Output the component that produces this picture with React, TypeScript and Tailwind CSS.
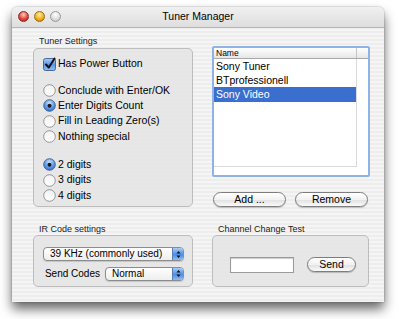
import React from "react";

const font = { fontFamily: '"Liberation Sans", Arial, sans-serif' };

function Radio({ on }: { on?: boolean }) {
  return (
    <svg width="13" height="13" viewBox="0 0 13 13" className="shrink-0">
      <defs>
        <radialGradient id="rb" cx="50%" cy="30%" r="70%">
          <stop offset="0" stopColor="#cfe3fb" />
          <stop offset="0.5" stopColor="#6ea5ea" />
          <stop offset="1" stopColor="#2f6fd0" />
        </radialGradient>
        <linearGradient id="rw" x1="0" y1="0" x2="0" y2="1">
          <stop offset="0" stopColor="#f2f2f2" />
          <stop offset="1" stopColor="#ffffff" />
        </linearGradient>
      </defs>
      <circle cx="6.5" cy="6.5" r="5.8" fill={on ? "url(#rb)" : "url(#rw)"} stroke={on ? "#3a5f95" : "#8a8a8a"} strokeWidth="0.9" />
      {on && <circle cx="6.5" cy="6.8" r="2" fill="#1a1a1a" />}
    </svg>
  );
}

function Check() {
  return (
    <svg width="14" height="14" viewBox="0 0 14 14" className="shrink-0">
      <defs>
        <linearGradient id="cb" x1="0" y1="0" x2="0" y2="1">
          <stop offset="0" stopColor="#a9cdf6" />
          <stop offset="0.5" stopColor="#5b97e6" />
          <stop offset="1" stopColor="#8fbef4" />
        </linearGradient>
      </defs>
      <rect x="0.5" y="1.5" width="12" height="12" rx="2" fill="url(#cb)" stroke="#3a5f95" strokeWidth="0.9" />
      <path d="M3 7.5 L5.8 10.5 L11.5 1.5" fill="none" stroke="#111" strokeWidth="2" strokeLinecap="round" strokeLinejoin="round" />
    </svg>
  );
}

function Row({ on, children }: { on?: boolean; children: React.ReactNode }) {
  return (
    <div className="h-[15.3px] flex items-center gap-[2px] text-[10.5px] text-black">
      <Radio on={on} />
      <span>{children}</span>
    </div>
  );
}

function Popup({ label, w }: { label: string; w: string }) {
  return (
    <div className={`${w} h-[14px] flex rounded-[4px] border border-[#8c8c8c] overflow-hidden bg-[linear-gradient(#ffffff,#eeeeee)] shadow-[0_1px_1px_rgba(0,0,0,0.15)]`}>
      <div className="flex-1 flex items-center pl-[6px] text-[10px] text-black leading-none">{label}</div>
      <div className="w-[11px] flex items-center justify-center bg-[linear-gradient(#a8cdf6,#4c8de4_55%,#8dbcf2)] border-l border-[#5a7fb5]">
        <svg width="5" height="9" viewBox="0 0 5 9">
          <path d="M0.5 3.5 L2.5 1 L4.5 3.5 Z" fill="#111" />
          <path d="M0.5 5.5 L2.5 8 L4.5 5.5 Z" fill="#111" />
        </svg>
      </div>
    </div>
  );
}

function Button({ label, w }: { label: string; w: string }) {
  return (
    <div className={`${w} h-[15px] rounded-full border border-[#7d7d7d] bg-[linear-gradient(#ffffff,#f2f2f2_50%,#e2e2e2_55%,#fafafa)] flex items-center justify-center text-[10.5px] text-black leading-none shadow-[0_1px_1px_rgba(0,0,0,0.2)]`}>
      {label}
    </div>
  );
}

export default function App() {
  return (
    <div className="w-[400px] h-[319px] bg-white pt-[7px] pl-[12px]" style={font}>
      <div className="w-[372px] h-[295px] rounded-t-[6px] flex flex-col overflow-hidden shadow-[0_7px_12px_rgba(0,0,0,0.6),0_0_2px_rgba(0,0,0,0.35)] bg-[repeating-linear-gradient(#ededed_0px,#ededed_2px,#f5f5f5_2px,#f5f5f5_4px)]">
        {/* title bar */}
        <div className="relative h-[21px] flex items-center border-b border-[#b5b5b5] bg-[linear-gradient(#f0f0f0,#dedede)]">
          <div className="absolute left-[6px] top-[4px] flex gap-[5px]">
            <span className="w-[11px] h-[11px] rounded-full border border-[#8a2a2a] bg-[radial-gradient(circle_at_50%_30%,#ffd0c8,#e8463c_55%,#a81d12)]" />
            <span className="w-[11px] h-[11px] rounded-full border border-[#9a6a10] bg-[radial-gradient(circle_at_50%_30%,#fff0b0,#f2b21c_55%,#c07808)]" />
            <span className="w-[11px] h-[11px] rounded-full border border-[#9a9a9a] bg-[radial-gradient(circle_at_50%_30%,#ffffff,#dcdcdc_60%,#b8b8b8)]" />
          </div>
          <div className="w-full text-center text-[10.5px] text-black">Tuner Manager</div>
        </div>
        {/* body */}
        <div className="flex pl-[21px] gap-[19px]">
          {/* left column */}
          <div className="w-[160px] flex flex-col pt-[7px]">
            <div className="h-[13px] pl-[6px] text-[9px] leading-[12px] text-[#222]">Tuner Settings</div>
            <div className="h-[159px] rounded-[5px] border border-[#bdbdbd] bg-[#e4e4e4]/80 pl-[9px] pt-[7px] flex flex-col">
              <div className="h-[15px] flex items-center gap-[1px] text-[10.5px] text-black">
                <Check />
                <span>Has Power Button</span>
              </div>
              <div className="mt-[12px] flex flex-col">
                <Row>Conclude with Enter/OK</Row>
                <Row on>Enter Digits Count</Row>
                <Row>Fill in Leading Zero(s)</Row>
                <Row>Nothing special</Row>
              </div>
              <div className="mt-[13px] flex flex-col">
                <Row on>2 digits</Row>
                <Row>3 digits</Row>
                <Row>4 digits</Row>
              </div>
            </div>
            <div className="mt-[16px] h-[12px] pl-[6px] text-[9px] leading-[12px] text-[#222]">IR Code settings</div>
            <div className="h-[52px] rounded-[5px] border border-[#bdbdbd] bg-[#e4e4e4]/80 pt-[11px] pl-[9px] flex flex-col gap-[5px]">
              <Popup label="39 KHz (commonly used)" w="w-[141px]" />
              <div className="flex items-center justify-end gap-[5px] pr-[9px] w-[150px]">
                <span className="text-[10px] text-black">Send Codes</span>
                <Popup label="Normal" w="w-[79px]" />
              </div>
            </div>
          </div>
          {/* right column */}
          <div className="w-[158px] flex flex-col pt-[18px]">
            <div className="h-[131px] border-2 border-[#8fb3e6] rounded-[2px] bg-white flex flex-col">
              <div className="flex flex-col h-full">
                <div className="h-[11px] flex border-b border-[#a9a9a9] bg-[linear-gradient(#ffffff,#e6e6e6)]">
                  <div className="w-[143px] pl-[2px] text-[8.5px] leading-[11px] text-black border-r border-[#c4c4c4]">Name</div>
                  <div className="flex-1" />
                </div>
                <div className="flex-1 flex">
                  <div className="w-[143px] flex flex-col border-r border-b border-[#dadada] h-[108px]">
                    <div className="h-[14px] pl-[2px] text-[10.5px] leading-[14px] text-black">Sony Tuner</div>
                    <div className="h-[14px] pl-[2px] text-[10.5px] leading-[14px] text-black">BTprofessionell</div>
                    <div className="h-[15px] pl-[2px] text-[10.5px] leading-[15px] text-white bg-[#3a6fcf]">Sony Video</div>
                  </div>
                </div>
              </div>
            </div>
            <div className="mt-[15px] flex gap-[9px] pl-[1px]">
              <Button label="Add ..." w="w-[73px]" />
              <Button label="Remove" w="w-[73px]" />
            </div>
            <div className="mt-[16px] h-[12px] pl-[6px] text-[9px] leading-[12px] text-[#222]">Channel Change Test</div>
            <div className="w-[157px] h-[52px] rounded-[5px] border border-[#bdbdbd] bg-[#e4e4e4]/80 pt-[21px] pl-[17px] flex items-start gap-[13px]">
              <div className="w-[64px] h-[16px] bg-white border border-[#9a9a9a] shadow-[inset_0_1px_1px_rgba(0,0,0,0.2)]" />
              <Button label="Send" w="w-[49px]" />
            </div>
          </div>
        </div>
      </div>
    </div>
  );
}
